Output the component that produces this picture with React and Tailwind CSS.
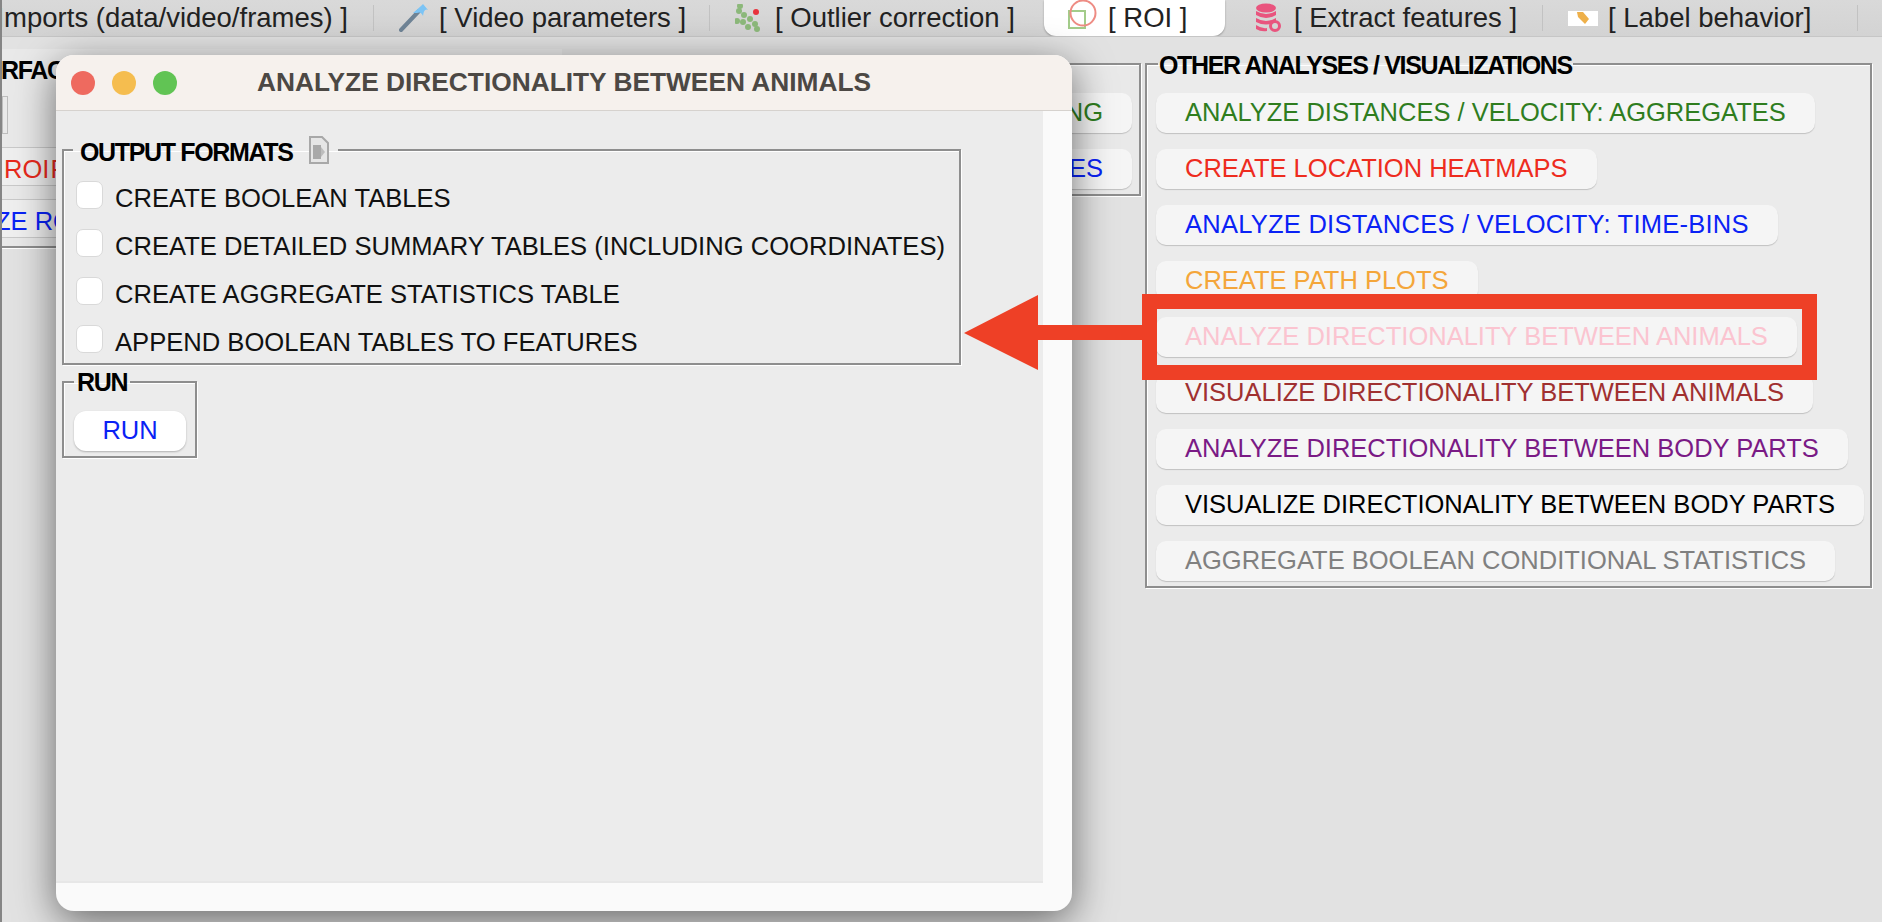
const FONT = { fontFamily: '"Liberation Sans", Arial, sans-serif' };

function VideoIcon() {
  return (
    <svg width="30" height="28" viewBox="0 0 30 28" className="shrink-0 blur-[0.4px]">
      <path d="M2 26 L20 7" stroke="#6f8496" strokeWidth="4" strokeLinecap="round" />
      <path d="M14 9 Q21 3 24 0 L29 6 Q25 4 24 12 Q22 7 18 9 Z" fill="#7cc4f5" />
    </svg>
  );
}

function OutlierIcon() {
  const dots = [[4, 7], [9, 11], [2, 17], [8, 18], [15, 15], [13, 23], [20, 20], [22, 25], [5, 2]];
  return (
    <svg width="26" height="28" viewBox="0 0 26 28" className="shrink-0 blur-[0.4px]">
      {dots.map(([x, y]) => (
        <circle key={`${x}-${y}`} cx={x} cy={y} r="3" fill="#8cb87a" />
      ))}
      <circle cx="21" cy="8" r="3" fill="#e8323c" />
    </svg>
  );
}

function RoiIcon() {
  return (
    <svg width="30" height="30" viewBox="0 0 30 30" className="shrink-0 self-start blur-[0.3px]">
      <rect x="1" y="11" width="16" height="17" fill="none" stroke="#a3cc8a" strokeWidth="2" />
      <circle cx="15" cy="13" r="12.5" fill="none" stroke="#ee8c84" strokeWidth="2" />
    </svg>
  );
}

function DatabaseIcon() {
  return (
    <svg width="27" height="30" viewBox="0 0 27 30" className="shrink-0 blur-[0.3px]">
      <ellipse cx="11" cy="5" rx="10" ry="4.5" fill="#e9547e" />
      <path d="M1 8 Q11 14 21 8 V12 Q11 18 1 12 Z" fill="#e9547e" />
      <path d="M1 15 Q11 21 21 15 V19 Q11 24 1 19 Z" fill="#e9547e" />
      <path d="M1 22 Q7 26 12 25 V28 Q6 29 1 26 Z" fill="#e9547e" />
      <circle cx="20" cy="23" r="4.5" fill="none" stroke="#e9547e" strokeWidth="3" />
    </svg>
  );
}

function LabelIcon() {
  return (
    <div className="flex h-[15px] w-[30px] shrink-0 items-center justify-center bg-white">
      <svg width="16" height="14" viewBox="0 0 16 14" className="blur-[0.5px]">
        <path d="M2 1 L8 1 L14 8 L10 13 L3 6 Z" fill="#eeb04a" />
      </svg>
    </div>
  );
}

function DocIcon() {
  return (
    <svg width="22" height="30" viewBox="0 0 22 30" className="shrink-0 blur-[0.4px]">
      <path d="M2 2 H14 L20 8 V28 H2 Z" fill="#e6e6e6" stroke="#a8a8a8" strokeWidth="2" />
      <rect x="5" y="10" width="8" height="14" fill="#a9a9a9" />
      <path d="M13 12 L17 17 L13 22 Z" fill="#bdbdbd" />
    </svg>
  );
}

function Separator() {
  return <div className="h-[26px] w-px shrink-0 bg-[#c2c2c2]" />;
}

function TabBar() {
  return (
    <div className="flex h-[37px] items-center overflow-hidden border-b border-[#c6c6c6] bg-gradient-to-b from-[#d9d9d9] to-[#d3d3d3] text-[27.5px] whitespace-nowrap text-[#222]">
      <div className="flex w-[371px] shrink-0 justify-end overflow-hidden pr-[25px]">
        <span className="shrink-0">[ Imports (data/video/frames) ]</span>
      </div>
      <Separator />
      <div className="flex w-[335px] shrink-0 items-center gap-[10px] pl-[25px]">
        <VideoIcon />
        <span>[ Video parameters ]</span>
      </div>
      <Separator />
      <div className="flex w-[334px] shrink-0 items-center gap-[14px] pl-[25px]">
        <OutlierIcon />
        <span>[ Outlier correction ]</span>
      </div>
      <div className="flex h-[36px] w-[181px] shrink-0 items-center gap-[10px] self-start rounded-b-[12px] bg-white pl-[24px] shadow-[0_1px_2px_rgba(0,0,0,0.3)]">
        <RoiIcon />
        <span>[ ROI ]</span>
      </div>
      <div className="flex w-[317px] shrink-0 items-center gap-[12px] pl-[30px]">
        <DatabaseIcon />
        <span>[ Extract features ]</span>
      </div>
      <Separator />
      <div className="flex w-[314px] shrink-0 items-center gap-[10px] pl-[25px]">
        <LabelIcon />
        <span>[ Label behavior]</span>
      </div>
      <Separator />
    </div>
  );
}

function Group({ title, icon, legendClass, titleClass, className, children }) {
  return (
    <fieldset className={`border-2 border-[#8e8e8e] shadow-[1px_1px_0_#fff,inset_1px_1px_0_#fff] ${className}`}>
      <legend className={`flex h-[30px] items-center text-[25px] font-bold tracking-[-1.35px] text-black ${legendClass}`}>
        <span className={titleClass}>{title}</span>
        {icon}
      </legend>
      {children}
    </fieldset>
  );
}

function PanelButton({ color, children }) {
  return (
    <button
      type="button"
      className={`h-[40px] rounded-[10px] bg-[#f5f5f5] px-[29px] pb-[2px] text-[25.5px] whitespace-nowrap shadow-[0_1px_1px_rgba(0,0,0,0.18)] ${color}`}
    >
      {children}
    </button>
  );
}

const ANALYSES = [
  { label: "ANALYZE DISTANCES / VELOCITY: AGGREGATES", color: "text-[#2f7d1e]" },
  { label: "CREATE LOCATION HEATMAPS", color: "text-[#ee2c1e]" },
  { label: "ANALYZE DISTANCES / VELOCITY: TIME-BINS", color: "text-[#0a22f5] tracking-[0.25px]" },
  { label: "CREATE PATH PLOTS", color: "text-[#f4a63a]" },
  { label: "ANALYZE DIRECTIONALITY BETWEEN ANIMALS", color: "text-[#fbc4d0]" },
  { label: "VISUALIZE DIRECTIONALITY BETWEEN ANIMALS", color: "text-[#a03030]" },
  { label: "ANALYZE DIRECTIONALITY BETWEEN BODY PARTS", color: "text-[#7a1a85]" },
  { label: "VISUALIZE DIRECTIONALITY BETWEEN BODY PARTS", color: "text-black" },
  { label: "AGGREGATE BOOLEAN CONDITIONAL STATISTICS", color: "text-[#808080]" },
];

const OUTPUTS = [
  "CREATE BOOLEAN TABLES",
  "CREATE DETAILED SUMMARY TABLES (INCLUDING COORDINATES)",
  "CREATE AGGREGATE STATISTICS TABLE",
  "APPEND BOOLEAN TABLES TO FEATURES",
];

function Background() {
  return (
    <div className="flex pt-[12px]">
      <div className="flex w-[1143px] shrink-0 justify-between pr-[4px]">
        <div className="flex h-[199px] w-[560px] shrink-0 flex-col bg-[#e9e9e9] text-[25.5px] whitespace-nowrap">
          <div className="mt-[6px] flex h-[32px] items-center overflow-hidden text-[25px] font-bold tracking-[-1.35px]">
            <span className="ml-[-1px]">RFACE</span>
          </div>
          <div className="mt-[9px] h-[39px] w-[6px] border border-[#bdbdbd]" />
          <div className="mt-[13px] flex h-[39px] items-center border-y border-[#c9c9c9] bg-[#efefef] pt-[5px] pl-[2px] text-[#e8291c] [word-spacing:-6px]">
            ROI FEATURES
          </div>
          <div className="mt-[13px] flex h-[39px] items-center overflow-hidden border-y border-[#c9c9c9] bg-[#efefef] pt-[5px] text-[#0a22f5]">
            <span className="ml-[-7px]">ZE ROI DATA</span>
          </div>
          <div className="mt-[8px] h-[2px] bg-[#8e8e8e] shadow-[0_1px_0_#fff]" />
        </div>
        <Group legendClass="ml-[20px]" className="h-[147px] w-[430px] shrink-0 bg-[#e9e9e9]">
          <div className="flex flex-col items-end gap-4 pt-[14px] pr-[7px]">
            <PanelButton color="text-[#2f7d1e]">ANALYZE ROI DATA: TIME-BINNING</PanelButton>
            <PanelButton color="text-[#0a22f5]">VISUALIZE ROI FEATURES</PanelButton>
          </div>
        </Group>
      </div>
      <Group
        title="OTHER ANALYSES / VISUALIZATIONS"
        legendClass="ml-[11px] px-[1px]"
        titleClass="translate-y-[2px]"
        className="h-[539px] w-[727px] shrink-0 bg-[#ebebeb]"
      >
        <div className="flex flex-col items-start gap-4 pt-[14px] pl-[9px]">
          {ANALYSES.map((item) => (
            <PanelButton key={item.label} color={item.color}>
              {item.label}
            </PanelButton>
          ))}
        </div>
      </Group>
    </div>
  );
}

function DialogWindow() {
  return (
    <div className="absolute top-[55px] left-[54px] flex h-[856px] w-[1016px] flex-col overflow-hidden rounded-[18px] bg-[#fafafa] shadow-[0_10px_40px_rgba(0,0,0,0.55)]">
      <div className="relative flex h-[56px] shrink-0 items-center justify-center border-b border-[#d6d2ce] bg-[#f6f1ed]">
        <div className="absolute top-[16px] left-[15px] flex gap-[17px]">
          <div className="h-[24px] w-[24px] rounded-full bg-[#ee6a5f]" />
          <div className="h-[24px] w-[24px] rounded-full bg-[#f5bd4f]" />
          <div className="h-[24px] w-[24px] rounded-full bg-[#61c454]" />
        </div>
        <div className="text-[26.3px] font-bold text-[#4c4844]">
          ANALYZE DIRECTIONALITY BETWEEN ANIMALS
        </div>
      </div>
      <div className="flex min-h-0 flex-1">
        <div className="flex w-[987px] shrink-0 flex-col">
          <div className="flex flex-1 flex-col items-start border-b-2 border-[#e7e7e7] bg-[#ececec] pt-[24px] pl-[6px]">
            <Group
              title="OUTPUT FORMATS"
              icon={<DocIcon />}
              legendClass="ml-[9px] gap-[15px] pr-[8px] pl-[7px]"
              titleClass="translate-y-[3px]"
              className="w-[899px]"
            >
              <div className="flex flex-col gap-[20px] pt-[16px] pb-[10px] pl-[12px]">
                {OUTPUTS.map((label) => (
                  <label key={label} className="flex h-[28px] items-center gap-[12px] text-[25.6px] whitespace-nowrap text-[#111]">
                    <input
                      type="checkbox"
                      className="h-[28px] w-[27px] appearance-none rounded-[7px] border border-[#d9d9d9] bg-white"
                    />
                    <span className="mt-[6px]">{label}</span>
                  </label>
                ))}
              </div>
            </Group>
            <Group title="RUN" legendClass="ml-[10px] px-[3px]" titleClass="translate-y-[1px]" className="mt-[2px] w-[135px]">
              <div className="pt-[14px] pb-[5px] pl-[10px]">
                <button
                  type="button"
                  className="h-[40px] w-[112px] rounded-[12px] bg-white pb-[2px] text-[25.5px] text-[#0a22f5] shadow-[0_1px_2px_rgba(0,0,0,0.25)]"
                >
                  RUN
                </button>
              </div>
            </Group>
          </div>
          <div className="h-[28px] shrink-0" />
        </div>
      </div>
    </div>
  );
}

function Annotation() {
  return (
    <>
      <div className="absolute top-[294px] left-[1140px] h-[86px] w-[675px] border-[15px] border-[#ee4026]" />
      <svg className="absolute top-[295px] left-[962px]" width="178" height="75" viewBox="0 0 178 75">
        <path d="M0 38 L74 0 V30 H178 V45 H74 V75 Z" fill="#ee4026" />
      </svg>
    </>
  );
}

export default function App() {
  return (
    <div
      className="relative h-[922px] w-[1882px] overflow-hidden border-l-2 border-[#858585] bg-[#e2e2e2]"
      style={FONT}
    >
      <TabBar />
      <Background />
      <DialogWindow />
      <Annotation />
    </div>
  );
}
